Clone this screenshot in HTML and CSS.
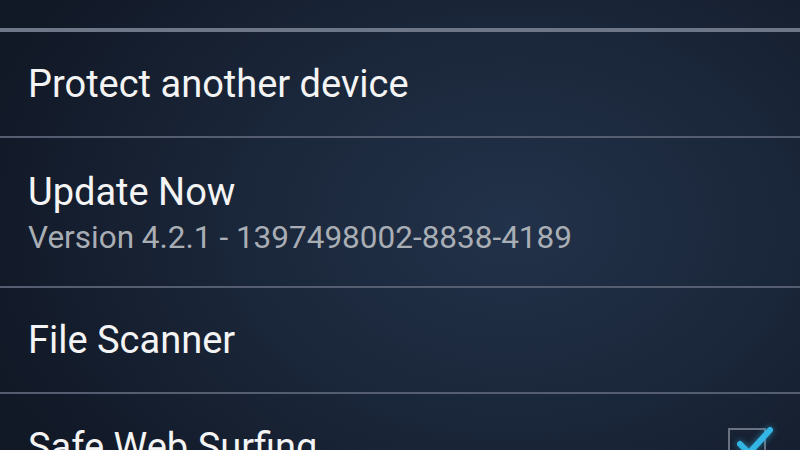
FILE: index.html
```html
<!DOCTYPE html>
<html lang="en">
<head>
    <meta charset="UTF-8">
    <meta name="viewport" content="width=device-width, initial-scale=1.0">
    <title>Settings</title>
    <link rel="stylesheet" href="styles.css">
</head>
<body>
    <div class="top-space"></div>
    <div class="top-line"></div>

    <div class="liste">
        <div class="rad">
            <div class="tittel">Protect another device</div>
        </div>
        <div class="skille"></div>

        <div class="rad rad-hoy">
            <div class="tittel">Update Now</div>
            <div class="undertekst">Version 4.2.1 - 1397498002-8838-4189</div>
        </div>
        <div class="skille"></div>

        <div class="rad">
            <div class="tittel">File Scanner</div>
        </div>
        <div class="skille"></div>

        <div class="rad rad-sjekk">
            <div class="tittel">Safe Web Surfing</div>
            <div class="sjekkboks">
                <svg class="hake" width="44" height="34" viewBox="0 0 44 34">
                    <path d="M8 20 L17 29 L38 6" fill="none" stroke="#33b5e5" stroke-width="6" stroke-linecap="round" stroke-linejoin="round"/>
                </svg>
            </div>
        </div>
    </div>
</body>
</html>
```

FILE: styles.css
```css
body {
    margin: 0;
    height: 100vh;
    overflow: hidden;
    background: radial-gradient(ellipse 70% 90% at 64% 50%, #22324a 0%, #1a2639 50%, #111826 100%);
    font-family: Roboto, "Noto Sans", sans-serif;
    color: #f4f4f4;
}

.top-space {
    height: 28px;
}

.top-line {
    height: 4px;
    background-color: #6d7788;
}

.rad {
    height: 104px;
    padding-left: 28px;
    padding-right: 34px;
    display: flex;
    flex-direction: column;
    justify-content: center;
}

.rad-hoy {
    height: 148px;
    padding-top: 4px;
    box-sizing: border-box;
}

.rad-sjekk {
    height: 105px;
    flex-direction: row;
    align-items: center;
    justify-content: space-between;
}

.tittel {
    font-size: 38px;
    line-height: 44px;
}

.undertekst {
    font-size: 31.5px;
    line-height: 40px;
    margin-top: 4px;
    color: #a9aeb5;
}

.skille {
    height: 2px;
    background-color: #545e70;
}

.sjekkboks {
    position: relative;
    width: 34px;
    height: 34px;
    border: 2px solid #6a7282;
}

.hake {
    position: absolute;
    left: 2px;
    top: -6px;
    filter: drop-shadow(0 0 3px rgba(51, 181, 229, 0.6));
}
```
